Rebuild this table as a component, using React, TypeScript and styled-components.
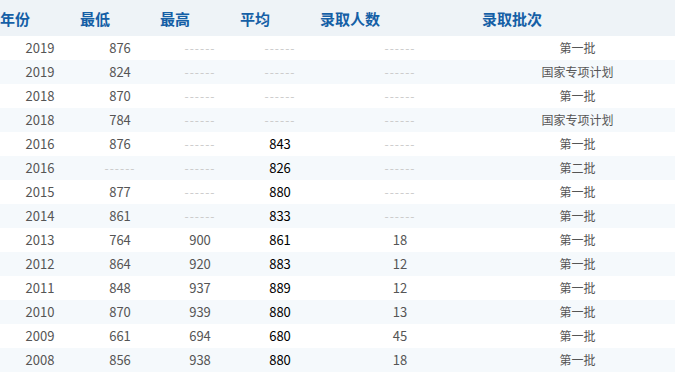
import styled, { createGlobalStyle } from "styled-components";

const GlobalStyle = createGlobalStyle`
  html, body {
    margin: 0;
    padding: 0;
    background: #fff;
  }
  body {
    font-family: "Noto Sans CJK SC", "Noto Sans", sans-serif;
  }
`;

type Row = {
    year: string;
    min: string;
    max: string;
    avg: string;
    count: string;
    batch: string;
};

const rows: Row[] = [
    { year: "2019", min: "876", max: "", avg: "", count: "", batch: "第一批" },
    { year: "2019", min: "824", max: "", avg: "", count: "", batch: "国家专项计划" },
    { year: "2018", min: "870", max: "", avg: "", count: "", batch: "第一批" },
    { year: "2018", min: "784", max: "", avg: "", count: "", batch: "国家专项计划" },
    { year: "2016", min: "876", max: "", avg: "843", count: "", batch: "第一批" },
    { year: "2016", min: "", max: "", avg: "826", count: "", batch: "第二批" },
    { year: "2015", min: "877", max: "", avg: "880", count: "", batch: "第一批" },
    { year: "2014", min: "861", max: "", avg: "833", count: "", batch: "第一批" },
    { year: "2013", min: "764", max: "900", avg: "861", count: "18", batch: "第一批" },
    { year: "2012", min: "864", max: "920", avg: "883", count: "12", batch: "第一批" },
    { year: "2011", min: "848", max: "937", avg: "889", count: "12", batch: "第一批" },
    { year: "2010", min: "870", max: "939", avg: "880", count: "13", batch: "第一批" },
    { year: "2009", min: "661", max: "694", avg: "680", count: "45", batch: "第一批" },
    { year: "2008", min: "856", max: "938", avg: "880", count: "18", batch: "第一批" },
];

function Value({ v, strong }: { v: string; strong?: boolean }) {
    if (!v) return <Empty>------</Empty>;
    return strong ? <Strong>{v}</Strong> : <>{v}</>;
}

export default function App() {
    return (
        <>
            <GlobalStyle />
            <Table>
                <colgroup>
                    <col style={{ width: 80 }} />
                    <col style={{ width: 80 }} />
                    <col style={{ width: 80 }} />
                    <col style={{ width: 80 }} />
                    <col style={{ width: 160 }} />
                    <col />
                </colgroup>
                <thead>
                    <HeadRow>
                        <Th>年份</Th>
                        <Th>最低</Th>
                        <Th>最高</Th>
                        <Th>平均</Th>
                        <Th>录取人数</Th>
                        <Th $pad={2}>录取批次</Th>
                    </HeadRow>
                </thead>
                <tbody>
                    {rows.map((r, i) => (
                        <BodyRow key={i} $striped={i % 2 === 1}>
                            <Td>{r.year}</Td>
                            <Td><Value v={r.min} /></Td>
                            <Td><Value v={r.max} /></Td>
                            <Td><Value v={r.avg} strong /></Td>
                            <Td><Value v={r.count} /></Td>
                            <Td $small>{r.batch}</Td>
                        </BodyRow>
                    ))}
                </tbody>
            </Table>
        </>
    );
}

const Table = styled.table`
  width: 675px;
  border-collapse: collapse;
  table-layout: fixed;
`;

const HeadRow = styled.tr`
  height: 36px;
  background: #eef3f7;
`;

const Th = styled.th<{ $pad?: number }>`
  padding: 0 0 0 ${(p) => p.$pad ?? 0}px;
  text-align: left;
  font-size: 15px;
  font-weight: bold;
  color: #155fa6;
  vertical-align: middle;
`;

const BodyRow = styled.tr<{ $striped: boolean }>`
  height: 24px;
  background: ${(p) => (p.$striped ? "#f5f9fc" : "#fff")};
`;

const Td = styled.td<{ $small?: boolean }>`
  padding: 0;
  text-align: center;
  font-size: ${(p) => (p.$small ? 12 : 13)}px;
  color: #555;
  vertical-align: middle;
  line-height: 24px;
`;

const Strong = styled.span`
  color: #000;
  font-weight: normal;
`;

const Empty = styled.span`
  font-size: 12px;
  color: #c8c8c8;
  letter-spacing: 1px;
`;
